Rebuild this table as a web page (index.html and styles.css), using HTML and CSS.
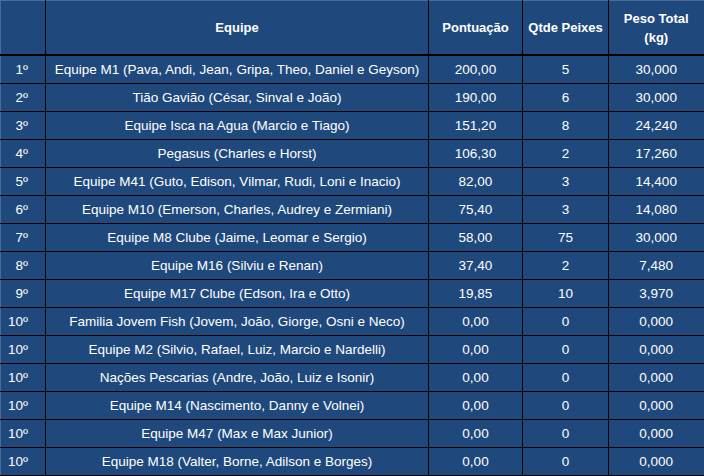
FILE: index.html
```html
<!DOCTYPE html>
<html lang="pt">
<head>
<meta charset="utf-8">
<title>Classificação</title>
<link rel="stylesheet" href="styles.css">
</head>
<body>
<table class="ranking">
  <colgroup>
    <col class="c-pos">
    <col class="c-team">
    <col class="c-pts">
    <col class="c-qty">
    <col class="c-kg">
  </colgroup>
  <thead>
    <tr>
      <th></th>
      <th>Equipe</th>
      <th>Pontuação</th>
      <th>Qtde Peixes</th>
      <th>Peso Total<br>(kg)</th>
    </tr>
  </thead>
  <tbody>
    <tr><td class="pos">1º</td><td>Equipe M1 (Pava, Andi, Jean, Gripa, Theo, Daniel e Geyson)</td><td>200,00</td><td>5</td><td>30,000</td></tr>
    <tr><td class="pos">2º</td><td>Tião Gavião (César, Sinval e João)</td><td>190,00</td><td>6</td><td>30,000</td></tr>
    <tr><td class="pos">3º</td><td>Equipe Isca na Agua (Marcio e Tiago)</td><td>151,20</td><td>8</td><td>24,240</td></tr>
    <tr><td class="pos">4º</td><td>Pegasus (Charles e Horst)</td><td>106,30</td><td>2</td><td>17,260</td></tr>
    <tr><td class="pos">5º</td><td>Equipe M41 (Guto, Edison, Vilmar, Rudi, Loni e Inacio)</td><td>82,00</td><td>3</td><td>14,400</td></tr>
    <tr><td class="pos">6º</td><td>Equipe M10 (Emerson, Charles, Audrey e Zermiani)</td><td>75,40</td><td>3</td><td>14,080</td></tr>
    <tr><td class="pos">7º</td><td>Equipe M8 Clube (Jaime, Leomar e Sergio)</td><td>58,00</td><td>75</td><td>30,000</td></tr>
    <tr><td class="pos">8º</td><td>Equipe M16 (Silviu e Renan)</td><td>37,40</td><td>2</td><td>7,480</td></tr>
    <tr><td class="pos">9º</td><td>Equipe M17 Clube (Edson, Ira e Otto)</td><td>19,85</td><td>10</td><td>3,970</td></tr>
    <tr><td class="pos">10º</td><td>Familia Jovem Fish (Jovem, João, Giorge, Osni e Neco)</td><td>0,00</td><td>0</td><td>0,000</td></tr>
    <tr><td class="pos">10º</td><td>Equipe M2 (Silvio, Rafael, Luiz, Marcio e Nardelli)</td><td>0,00</td><td>0</td><td>0,000</td></tr>
    <tr><td class="pos">10º</td><td>Nações Pescarias (Andre, João, Luiz e Isonir)</td><td>0,00</td><td>0</td><td>0,000</td></tr>
    <tr><td class="pos">10º</td><td>Equipe M14 (Nascimento, Danny e Volnei)</td><td>0,00</td><td>0</td><td>0,000</td></tr>
    <tr><td class="pos">10º</td><td>Equipe M47 (Max e Max Junior)</td><td>0,00</td><td>0</td><td>0,000</td></tr>
    <tr><td class="pos">10º</td><td>Equipe M18 (Valter, Borne, Adilson e Borges)</td><td>0,00</td><td>0</td><td>0,000</td></tr>
  </tbody>
</table>
</body>
</html>
```

FILE: styles.css
```css
html, body {
  margin: 0;
  padding: 0;
  background: #000000;
}

.ranking {
  width: 704px;
  table-layout: fixed;
  border-collapse: collapse;
  background: #1f497d;
  color: #ffffff;
  font-family: "Liberation Sans", Arial, sans-serif;
  font-size: 13px;
  border-top: 1px solid #4a6c98;
  border-left: 1px solid #4a6c98;
}

.c-pos { width: 45px; }
.c-team { width: 383px; }
.c-pts { width: 94px; }
.c-qty { width: 86px; }
.c-kg { width: 96px; }

.ranking th,
.ranking td {
  border-right: 1px solid #000000;
  border-bottom: 1px solid #000000;
  text-align: center;
  padding: 0;
  overflow: hidden;
  white-space: nowrap;
}

.ranking th:last-child,
.ranking td:last-child {
  border-right: 2px solid #000000;
}

.ranking thead th {
  height: 53px;
  font-weight: bold;
  line-height: 19px;
  border-bottom: 2px solid #000000;
}

.ranking tbody td {
  height: 27px;
  line-height: 27px;
  font-size: 13.5px;
}

.ranking tbody tr:last-child td {
  border-bottom: 3px solid #000000;
}

.ranking td.pos {
  text-align: right;
  padding-right: 17px;
}
```
